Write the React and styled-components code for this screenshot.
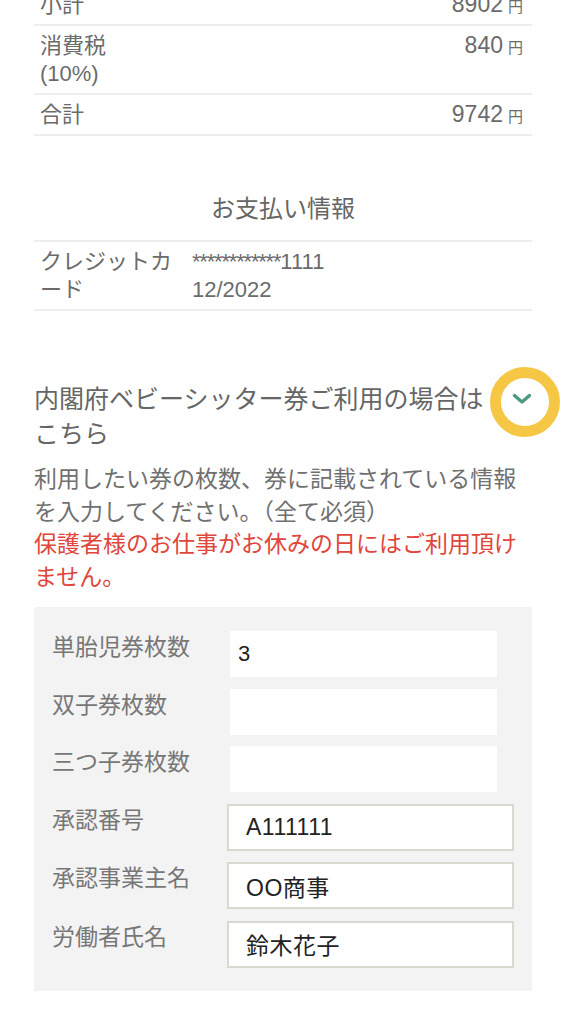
import styled, { createGlobalStyle } from "styled-components"

const GlobalStyle = createGlobalStyle`
  body {
    margin: 0;
    background: #ffffff;
    font-family: "Liberation Sans", "Noto Sans CJK JP", sans-serif;
    color: #6b6b6b;
  }
`

const Page = styled.div`
  width: 498px;
  padding: 0 42px 40px 34px;
  overflow: hidden;
`

const Summary = styled.div`
  margin-top: -15px;
`

const Row = styled.div`
  display: flex;
  justify-content: space-between;
  align-items: flex-start;
  padding: 6px 9px 5px 6px;
  border-bottom: 2px solid #eeeeee;
  font-size: 22px;
  line-height: 28px;
`

const Price = styled.span`
  font-size: 23px;
  line-height: 1;
  white-space: nowrap;
  padding-top: 2px;
`

const Yen = styled.span`
  font-size: 15px;
  line-height: 1;
  margin-left: 5px;
`

const Heading = styled.h2`
  margin: 56px 0 14px;
  font-weight: normal;
  font-size: 24px;
  line-height: 34px;
  text-align: center;
  color: #666666;
`

const PayTable = styled.div`
  border-top: 2px solid #eeeeee;
`

const PayRow = styled(Row)`
  justify-content: flex-start;
  padding: 6px 0 5px;
`

const PayLabel = styled.div`
  width: 152px;
  box-sizing: border-box;
  padding: 0 6px;
  flex-shrink: 0;
`

const PayValue = styled.div`
  padding: 0 6px;
`

const Mask = styled.span`
  letter-spacing: -1.2px;
`

const Title = styled.div`
  position: relative;
  margin-top: 71px;
  padding-right: 38px;
  font-size: 25px;
  line-height: 35px;
  color: #666666;
`

const Toggle = styled.span`
  position: absolute;
  right: 0;
  top: 7px;
  width: 20px;
  height: 20px;
  display: flex;
  align-items: center;
  justify-content: center;
`

const Highlight = styled.span`
  position: absolute;
  right: -28px;
  top: -15px;
  width: 70px;
  height: 70px;
  box-sizing: border-box;
  border: 11px solid #f6c645;
  border-radius: 50%;
  pointer-events: none;
`

const Note = styled.p`
  margin: ${(p) => (p.$warn ? "0" : "11px 0 0")};
  font-size: 23px;
  line-height: 32.5px;
  color: ${(p) => (p.$warn ? "#e0463b" : "#707070")};
`

const Panel = styled.div`
  margin-top: 14px;
  background: #f3f3f3;
  padding: 24px 18px 23.5px;
  display: flex;
  flex-direction: column;
  gap: 11.5px;
`

const Field = styled.div`
  display: flex;
  align-items: flex-start;
`

const Label = styled.label`
  width: 175px;
  flex-shrink: 0;
  font-size: 23px;
  line-height: 32px;
  color: #777777;
`

const Input = styled.input`
  box-sizing: border-box;
  font-family: "Liberation Sans", "Noto Sans CJK JP", sans-serif;
  color: #222222;
  background: #ffffff;
  outline: none;
  ${(p) =>
    p.$plain
      ? `
    margin-left: 3px;
    width: 267px;
    height: 46px;
    border: none;
    padding: 0 8px;
    font-size: 22px;
  `
      : `
    width: 287px;
    height: 47px;
    border: 2px solid #d9dacf;
    padding: 0 15px 0 17px;
    font-size: 23px;
    letter-spacing: 0.5px;
  `}
`

const counts = [
  { label: "単胎児券枚数", value: "3" },
  { label: "双子券枚数", value: "" },
  { label: "三つ子券枚数", value: "" },
]

const details = [
  { label: "承認番号", value: "A111111" },
  { label: "承認事業主名", value: "OO商事" },
  { label: "労働者氏名", value: "鈴木花子" },
]

export default function App() {
  return (
    <Page>
      <GlobalStyle />
      <Summary>
        <Row>
          <span>小計</span>
          <Price>8902<Yen>円</Yen></Price>
        </Row>
        <Row>
          <span>消費税<br />(10%)</span>
          <Price>840<Yen>円</Yen></Price>
        </Row>
        <Row>
          <span>合計</span>
          <Price>9742<Yen>円</Yen></Price>
        </Row>
      </Summary>

      <Heading>お支払い情報</Heading>
      <PayTable>
        <PayRow>
          <PayLabel>クレジットカード</PayLabel>
          <PayValue>
            <Mask>************</Mask>1111
            <br />
            12/2022
          </PayValue>
        </PayRow>
      </PayTable>

      <Title>
        内閣府ベビーシッター券ご利用の場合はこちら
        <Toggle>
          <svg width="20" height="12" viewBox="0 0 20 12">
            <polyline points="2.5,2.5 10,9 17.5,2.5" fill="none" stroke="#4c9a80" strokeWidth="3.4" strokeLinecap="round" strokeLinejoin="round" />
          </svg>
        </Toggle>
        <Highlight />
      </Title>
      <Note>利用したい券の枚数、券に記載されている情報を入力してください。（全て必須）</Note>
      <Note $warn>保護者様のお仕事がお休みの日にはご利用頂けません。</Note>

      <Panel>
        {counts.map((f) => (
          <Field key={f.label}>
            <Label>{f.label}</Label>
            <Input $plain type="text" defaultValue={f.value} />
          </Field>
        ))}
        {details.map((f) => (
          <Field key={f.label}>
            <Label>{f.label}</Label>
            <Input type="text" defaultValue={f.value} />
          </Field>
        ))}
      </Panel>
    </Page>
  )
}
